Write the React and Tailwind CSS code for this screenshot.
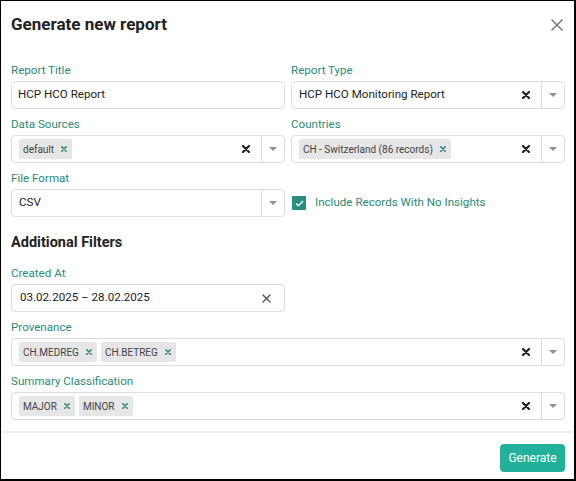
import React from "react";

const BoldX = () => (
  <svg width="8" height="8" viewBox="0 0 8 8">
    <path d="M1 1L7 7M7 1L1 7" stroke="#222" strokeWidth="2.2" strokeLinecap="round" />
  </svg>
);

const TagX = () => (
  <svg width="6" height="6" viewBox="0 0 6 6">
    <path d="M0.8 0.8L5.2 5.2M5.2 0.8L0.8 5.2" stroke="#2a8a78" strokeWidth="1.6" strokeLinecap="round" />
  </svg>
);

const Caret = () => (
  <svg width="8" height="4" viewBox="0 0 8 4">
    <path d="M0 0H8L4 4Z" fill="#8a8f99" />
  </svg>
);

const Tag = ({ children }) => (
  <div className="h-[20px] flex items-center gap-[7px] pl-[4px] pr-[5px] bg-[#e6e6e6] rounded-[2px] text-[10px] text-[#444]">
    <span>{children}</span>
    <TagX />
  </div>
);

const Label = ({ children }) => (
  <div className="h-[16px] leading-[16px] text-[11.6px] text-[#2a8a78] mb-[3px]">{children}</div>
);

const Select = ({ children, clearable = true, textMode = false }) => (
  <div className="h-[28px] border border-[#dcdcdc] rounded-[4px] flex items-center bg-white">
    <div
      className={
        textMode
          ? "flex-1 flex items-center pl-[7px] text-[11.6px] text-[#222]"
          : "flex-1 flex items-center gap-[4px] pl-[7px]"
      }
    >
      {children}
    </div>
    {clearable && (
      <div className="w-[20px] mr-[5px] flex items-center justify-center">
        <BoldX />
      </div>
    )}
    <div className="self-stretch w-px bg-[#dcdcdc]" />
    <div className="w-[22px] flex items-center justify-center">
      <Caret />
    </div>
  </div>
);

export default function App() {
  return (
    <div className="w-[576px] h-[481px] bg-white border-l border-t border-r-2 border-b-2 border-black flex flex-col font-['Roboto',sans-serif]">
      <div className="h-[49px] shrink-0 flex items-center justify-between pl-[10px] pr-[11px] pb-[1px]">
        <div className="text-[17px] font-bold text-[#222]">Generate new report</div>
        <svg width="12" height="12" viewBox="0 0 12 12">
          <path d="M0.5 0.5L11.5 11.5M11.5 0.5L0.5 11.5" stroke="#777" strokeWidth="1.5" />
        </svg>
      </div>
      <div className="border-b-2 border-[#eeeeee] pl-[10px] pr-[9px] pt-[12px] pb-[11px]">
        <div className="grid grid-cols-2 gap-x-[6px] gap-y-[7px]">
          <div>
            <Label>Report Title</Label>
            <div className="h-[28px] border border-[#dcdcdc] rounded-[4px] flex items-center pl-[6px] text-[11.6px] text-[#222]">
              HCP HCO Report
            </div>
          </div>
          <div>
            <Label>Report Type</Label>
            <Select textMode>HCP HCO Monitoring Report</Select>
          </div>
          <div>
            <Label>Data Sources</Label>
            <Select>
              <Tag>default</Tag>
            </Select>
          </div>
          <div>
            <Label>Countries</Label>
            <Select>
              <Tag>CH - Switzerland (86 records)</Tag>
            </Select>
          </div>
          <div>
            <Label>File Format</Label>
            <Select textMode clearable={false}>
              CSV
            </Select>
          </div>
          <div className="pt-[19px]">
            <div className="h-[28px] flex items-center gap-[9px] pl-[1px]">
              <div className="w-[14px] h-[14px] bg-[#26907d] flex items-center justify-center rounded-[1px]">
                <svg width="9" height="7" viewBox="0 0 9 7">
                  <path d="M1 3.6L3.4 5.8L8 1" stroke="white" strokeWidth="1.3" fill="none" />
                </svg>
              </div>
              <span className="text-[11.6px] text-[#2a8a78]">Include Records With No Insights</span>
            </div>
          </div>
        </div>
        <div className="mt-[16px] mb-[12px] h-[20px] leading-[20px] text-[14.5px] font-bold text-[#222]">
          Additional Filters
        </div>
        <div className="flex flex-col gap-[7px]">
          <div className="w-[274px]">
            <Label>Created At</Label>
            <div className="h-[28px] border border-[#dcdcdc] rounded-[4px] flex items-center justify-between pl-[8px] pr-[13px] text-[11.6px] text-[#222]">
              <span>03.02.2025 – 28.02.2025</span>
              <svg width="9" height="9" viewBox="0 0 9 9">
                <path d="M0.5 0.5L8.5 8.5M8.5 0.5L0.5 8.5" stroke="#555" strokeWidth="1.3" />
              </svg>
            </div>
          </div>
          <div>
            <Label>Provenance</Label>
            <Select>
              <Tag>CH.MEDREG</Tag>
              <Tag>CH.BETREG</Tag>
            </Select>
          </div>
          <div>
            <Label>Summary Classification</Label>
            <Select>
              <Tag>MAJOR</Tag>
              <Tag>MINOR</Tag>
            </Select>
          </div>
        </div>
      </div>
      <div className="flex-1 flex justify-end items-start pt-[11px] pr-[9px]">
        <button className="h-[28px] w-[65px] rounded-[4px] bg-[#21b19b] text-white text-[12px]">Generate</button>
      </div>
    </div>
  );
}
